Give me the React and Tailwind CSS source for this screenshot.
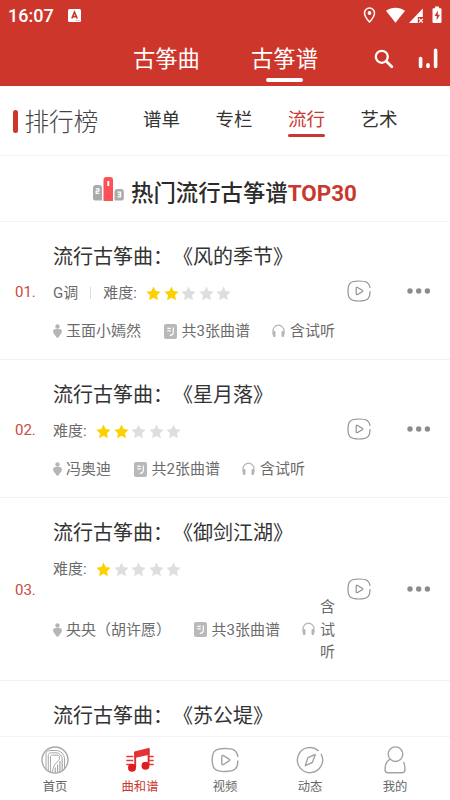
/**
 * App.jsx — Guzheng score ranking screen: status bar, top tabs,
 * category tabs, TOP30 list and bottom navigation.
 */

const CATEGORIES = ['谱单', '专栏', '流行', '艺术'];

const SCORES = [
  { rank: '01.', title: '风的季节', pitch: 'G调', stars: 2, player: '玉面小嫣然',     sheets: 3 },
  { rank: '02.', title: '星月落',   pitch: null,  stars: 2, player: '冯奥迪',         sheets: 2 },
  { rank: '03.', title: '御剑江湖', pitch: null,  stars: 1, player: '央央（胡许愿）', sheets: 3 },
];

// Only the title of the next score peeks out above the navigation
const NEXT_TITLE = '苏公堤';

const NAV = [
  { label: '首页',   Icon: HomeIcon },
  { label: '曲和谱', Icon: MusicIcon, active: true },
  { label: '视频',   Icon: VideoIcon },
  { label: '动态',   Icon: CompassIcon },
  { label: '我的',   Icon: UserIcon },
];

function StatusBar() {
  return (
    <div className="flex h-8 items-center justify-between pl-2 pr-[7px] text-white">
      <div className="flex items-center gap-[14px]">
        <span className="text-[18px] font-medium leading-8">16:07</span>
        <svg className="mt-[-2px] h-[13px] w-[13px]" viewBox="0 0 13 13">
          <rect width="13" height="13" rx="1.5" fill="#fff" />
          <path d="M3.8 9.5 6.5 3l2.7 6.5M4.8 7.6h3.4" fill="none" stroke="#cd362b" strokeWidth="1.6" />
          <path d="M7.5 11.6h4" stroke="#e5a29c" strokeWidth="0.8" />
        </svg>
      </div>
      <svg className="mb-[2px] h-[18px] w-[81px]" viewBox="0 0 81 18">
        <path d="M7.500 2a5 5 0 0 0-5 5c0 3.700 5 9 5 9s5-5.300 5-9a5 5 0 0 0-5-5Z" fill="none" stroke="#fff" strokeWidth="1.500" />
        <circle cx="7.500" cy="7" r="1.900" fill="#fff" />
        <path d="M24 4.800C29.700.600 37.300.600 43 4.800L33.500 16.700Z" fill="#fff" />
        <path d="M60.800 2.500v8.500h-5V17H47Z" fill="#fff" />
        <path d="m57 12.800 3.800 3.800m0-3.800L57 16.600" stroke="#fff" strokeWidth="1.300" />
        <path d="M73 .500h4v1.800h1.500a1 1 0 0 1 1 1V16a1 1 0 0 1-1 1h-7a1 1 0 0 1-1-1V3.300a1 1 0 0 1 1-1H73Z" fill="#fff" />
        <path d="m75.800 4.500-3.300 5.500h2.200v4.300l3.200-5.600h-2.100Z" fill="#cd362b" />
      </svg>
    </div>
  );
}

function TopTabs() {
  return (
    <div className="flex h-[54px] pl-[133px] pr-3 text-[22.300px] leading-[54px] text-white">
      <span className="w-[118px]">古筝曲</span>
      <div className="flex w-[67px] flex-col items-center">
        <span className="h-[46px]">古筝谱</span>
        <span className="h-[3.500px] w-[37px] rounded-full bg-white" />
      </div>
      <div className="ml-auto flex items-center gap-6 pb-[2px]">
        <svg className="mt-[1px] h-5 w-5" viewBox="0 0 20 20" fill="none" stroke="#fff" strokeLinecap="round">
          <circle cx="7.800" cy="7.800" r="6" strokeWidth="2.300" />
          <path d="m12.500 12.500 5.300 5.300" strokeWidth="2.800" />
        </svg>
        <svg className="h-[21px] w-5" viewBox="0 0 20 21" stroke="#fff" strokeWidth="3.600" strokeLinecap="round">
          <path d="M2.600 10.500V18.500M10 16.700V18.500M17.600 2.300V18.500" />
        </svg>
      </div>
    </div>
  );
}

function CategoryBar() {
  return (
    <div className="flex h-[70px] border-b border-[#f4f4f4] pl-[13px]">
      <span className="mt-[24px] h-[23px] w-[4.500px] rounded-full bg-[#cd362b]" />
      <span className="ml-[7px] w-[118.500px] text-[24.600px] font-light leading-[73px] text-[#444]">排行榜</span>
      <div className="flex gap-[35.500px] text-[18.500px] text-[#333]">
        {CATEGORIES.map((c) => (
          <div key={c} className="flex w-[37px] flex-col">
            <span className={`h-12 whitespace-nowrap leading-[68px] ${c === '流行' ? 'text-[#c8382e]' : ''}`}>{c}</span>
            {c === '流行' && <span className="h-[2.500px] rounded-full bg-[#c8382e]" />}
          </div>
        ))}
      </div>
    </div>
  );
}

function ListHeading() {
  return (
    <div className="flex h-[66px] items-center border-b border-[#f4f4f4] pl-[92px]">
      <svg className="h-6 w-8" viewBox="0 0 32 24">
        <path d="M1 11a3 3 0 0 1 3-3h3a3 3 0 0 1 3 3v12.500H3a2 2 0 0 1-2-2Z" fill="#ababab" />
        <path d="M11.500 24V3a3 3 0 0 1 3-3H18a3 3 0 0 1 3 3v21Z" fill="#fb5157" />
        <path d="M22.500 23.500V15a3 3 0 0 1 3-3h3.300a3 3 0 0 1 3 3v6.500a2 2 0 0 1-2 2Z" fill="#ababab" />
        <g fill="none" stroke="#fff" strokeWidth="1.300">
          <path d="M16.300 4v5" strokeWidth="2" />
          <path d="M3.800 11.800h3v2.300h-2.600v2.300h3" />
          <path d="M25.500 15.200h3v4.600h-3m.5-2.300h2.500" />
        </g>
      </svg>
      <h1 className="ml-[7px] mt-2 whitespace-nowrap text-[22.400px] font-medium leading-8 text-[#2b2b2b]">
        热门流行古筝谱<span className="font-bold text-[#c8382e]">TOP30</span>
      </h1>
    </div>
  );
}

function Stars({ count }) {
  return (
    <div className="flex gap-[2.500px]">
      {[0, 1, 2, 3, 4].map((i) => (
        <svg key={i} className={`h-[15px] w-[15px] ${i < count ? 'fill-[#fdd000]' : 'fill-[#dedede]'}`} viewBox="0 0 15 15">
          <path d="m7.500.500 2.100 4.500 5 .7-3.600 3.500.9 5-4.400-2.400-4.400 2.400.9-5L.400 5.700l5-.7Z" />
        </svg>
      ))}
    </div>
  );
}

function PersonIcon() {
  return (
    <svg className="h-[14px] w-[9px] shrink-0" viewBox="0 0 9 14" fill="#b5b5b5">
      <circle cx="4.500" cy="2.500" r="2.200" />
      <path d="M2.500 5h4C8.200 5 9 6.300 8.900 7.800 8.600 10.300 6 11.300 5.700 13.500H3.300C3 11.300.400 10.300.100 7.800 0 6.300.800 5 2.500 5Z" />
    </svg>
  );
}

function SheetIcon() {
  return (
    <svg className="h-[15px] w-[13px] shrink-0" viewBox="0 0 13 15" fill="none">
      <rect width="13" height="15" rx="2" fill="#b9b9b9" />
      <path d="M3.300 4.300h3.500M3.300 6.800h3.500M9.300 3.500v4.800c0 2-1.300 3-3.500 3" stroke="#fff" strokeWidth="1.200" />
    </svg>
  );
}

function HeadphoneIcon() {
  return (
    <svg className="mb-[2px] h-[13px] w-[13px] shrink-0" viewBox="0 0 13 13" fill="none" stroke="#b5b5b5">
      <path d="M1 10.500V7a5.500 5.800 0 0 1 11 0v3.500" strokeWidth="1.200" />
      <path d="M2.200 8.300v3.500M10.800 8.300v3.500" strokeWidth="2.600" strokeLinecap="round" />
    </svg>
  );
}

function PlayIcon() {
  return (
    <svg className="h-[22px] w-6" viewBox="0 0 24 22" fill="none" stroke="#929292" strokeWidth="1.200" strokeLinecap="round" strokeLinejoin="round">
      <path d="M23 7.500C22.300 2.700 19.700 1 12 1 3.300 1 1 3.300 1 11s2.300 10 11 10 11-2.500 11-9.500" />
      <path d="M9.200 8.200c0-.9.700-1.200 1.400-.8l4.600 2.800c.7.400.7 1.100 0 1.500l-4.600 2.800c-.7.400-1.400 0-1.400-.8Z" />
    </svg>
  );
}

function ScoreTitle({ title }) {
  return (
    <h2 className="whitespace-nowrap text-[20px] leading-[30px] text-[#333] [text-spacing-trim:space-all]">
      流行古筝曲：《{title}》
    </h2>
  );
}

function ScoreRow({ score }) {
  return (
    <li className="flex items-center border-b border-[#f2f2f2] pl-[15px]">
      <span className="mt-[3px] w-[38px] shrink-0 text-[15px] text-[#c94a42]">{score.rank}</span>
      <div className="w-[282px] shrink-0 pb-[16.500px] pt-5">
        <ScoreTitle title={score.title} />
        <div className="mt-[10px] flex h-[22px] items-center text-[15px] text-[#6b6b6b]">
          {score.pitch && (
            <>
              <span>{score.pitch}</span>
              <span className="mx-3 h-3 w-px bg-[#ddd]" />
            </>
          )}
          <span className="mr-[9.500px]">难度:</span>
          <Stars count={score.stars} />
        </div>
        <div className="mt-4 flex items-center text-[15px] leading-[22.500px] text-[#6b6b6b]">
          <PersonIcon />
          <span className="ml-1 mr-[22.500px] shrink-0">{score.player}</span>
          <SheetIcon />
          <span className="ml-[5px] mr-[22px] shrink-0">共{score.sheets}张曲谱</span>
          <HeadphoneIcon />
          <span className="ml-[5px]">含试听</span>
        </div>
      </div>
      <div className="ml-3 flex items-center gap-9">
        <PlayIcon />
        <svg className="h-[6px] w-6" viewBox="0 0 24 6" fill="#8c8c8c">
          <circle cx="3" cy="3" r="2.700" />
          <circle cx="11.700" cy="3" r="2.700" />
          <circle cx="20.400" cy="3" r="2.700" />
        </svg>
      </div>
    </li>
  );
}

function HomeIcon() {
  return (
    <svg className="h-7 w-7" viewBox="0 0 28 28" fill="none" stroke="#a8a8a8" strokeWidth="1">
      <circle cx="14" cy="14" r="13" strokeWidth="1.400" />
      <path d="M5 23V8.500C5 5.800 6.500 4.500 10 4.500h5c5 0 8.500 4 8.500 8.500v9.500" />
      <path d="M7.300 25V9.500c0-1.800 1-2.700 3.200-2.700h4.500c3.500 0 5.800 2.500 6.200 5.700" />
      <path d="M9.500 26V11c0-1.200.7-1.900 2.200-1.900H16c2 0 3 1.200 2.700 3-.9 4.400-6.700 4.400-7.200 14.400" />
      <path d="M21.200 12.500v12M18.900 15v11M16.600 18.500v8M14.300 21.500v5" strokeWidth="1.200" />
    </svg>
  );
}

function MusicIcon() {
  return (
    <svg className="h-7 w-7" viewBox="0 0 28 28" fill="none">
      <g stroke="#e23a3c" strokeWidth="1.300">
        <path d="M.300 10.500h7M.300 14.500h7M.300 18.500h5M23 10.500h4.700M23 14.500h4.700M23 18.500h4.700" />
      </g>
      <path d="M8.300 5.500 23.500 1.800v7L8.300 12Z" fill="#e33335" />
      <path d="M9.200 6v15M22.600 3v15.500" stroke="#e02d30" strokeWidth="1.900" />
      <circle cx="6" cy="21.800" r="4" fill="#de1d22" />
      <circle cx="19.500" cy="19.800" r="4" fill="#de1d22" />
    </svg>
  );
}

function VideoIcon() {
  return (
    <svg className="h-7 w-7" viewBox="0 0 28 28" fill="none" stroke="#a3a3a3" strokeWidth="1.400" strokeLinecap="round" strokeLinejoin="round">
      <path d="M26.800 10.500C25.800 4 22.500 2.500 14 2.500 4 2.500 1.200 5.500 1.200 14S4 25.500 14 25.500 26.800 22.500 26.800 15" />
      <path d="M10.800 10.500c0-1 .8-1.400 1.600-.9l5.700 3.600c.8.500.8 1.200 0 1.700l-5.700 3.600c-.8.500-1.600 0-1.600-.9Z" />
    </svg>
  );
}

function CompassIcon() {
  return (
    <svg className="h-7 w-7" viewBox="0 0 28 28" fill="none" stroke="#a3a3a3" strokeWidth="1.400" strokeLinecap="round" strokeLinejoin="round">
      <path d="M22.300 4.600A12.600 12.600 0 1 0 25.200 8.300" />
      <path d="m19.300 8.500-3 8-7 3.200 2.600-8Z" />
    </svg>
  );
}

function UserIcon() {
  return (
    <svg className="h-7 w-7" viewBox="0 0 28 28" fill="none" stroke="#a3a3a3" strokeWidth="1.400" strokeLinecap="round">
      <circle cx="14.500" cy="8.200" r="7.300" />
      <path d="M8.800 13.300C5 15.300 4 18 4 23.500c0 2.300 1 3.200 3 3.200h14c2 0 3-1 3-3.200 0-3-.2-5-1.200-7" />
    </svg>
  );
}

export default function App() {
  return (
    <div className="flex h-[800px] w-[450px] flex-col overflow-hidden bg-white font-['Roboto','Noto_Sans_CJK_SC',sans-serif]" lang="zh-CN">
      <header className="h-[86px] shrink-0 bg-[#cd362b]">
        <StatusBar />
        <TopTabs />
      </header>

      <main className="min-h-0 flex-1 overflow-hidden">
        <CategoryBar />
        <ListHeading />
        <ul>
          {SCORES.map((s) => (
            <ScoreRow key={s.rank} score={s} />
          ))}
          <li className="pl-[53px] pt-5">
            <ScoreTitle title={NEXT_TITLE} />
          </li>
        </ul>
      </main>

      <nav className="grid h-16 shrink-0 grid-cols-5 border-t border-[#f4f4f4] px-[12.500px]">
        {NAV.map(({ label, Icon, active }) => (
          <div key={label} className="flex flex-col items-center pt-[9px]">
            <Icon />
            <span className={`mt-1 text-[12.300px] leading-[18px] ${active ? 'text-[#c8382e]' : 'text-[#666]'}`}>{label}</span>
          </div>
        ))}
      </nav>
    </div>
  );
}
